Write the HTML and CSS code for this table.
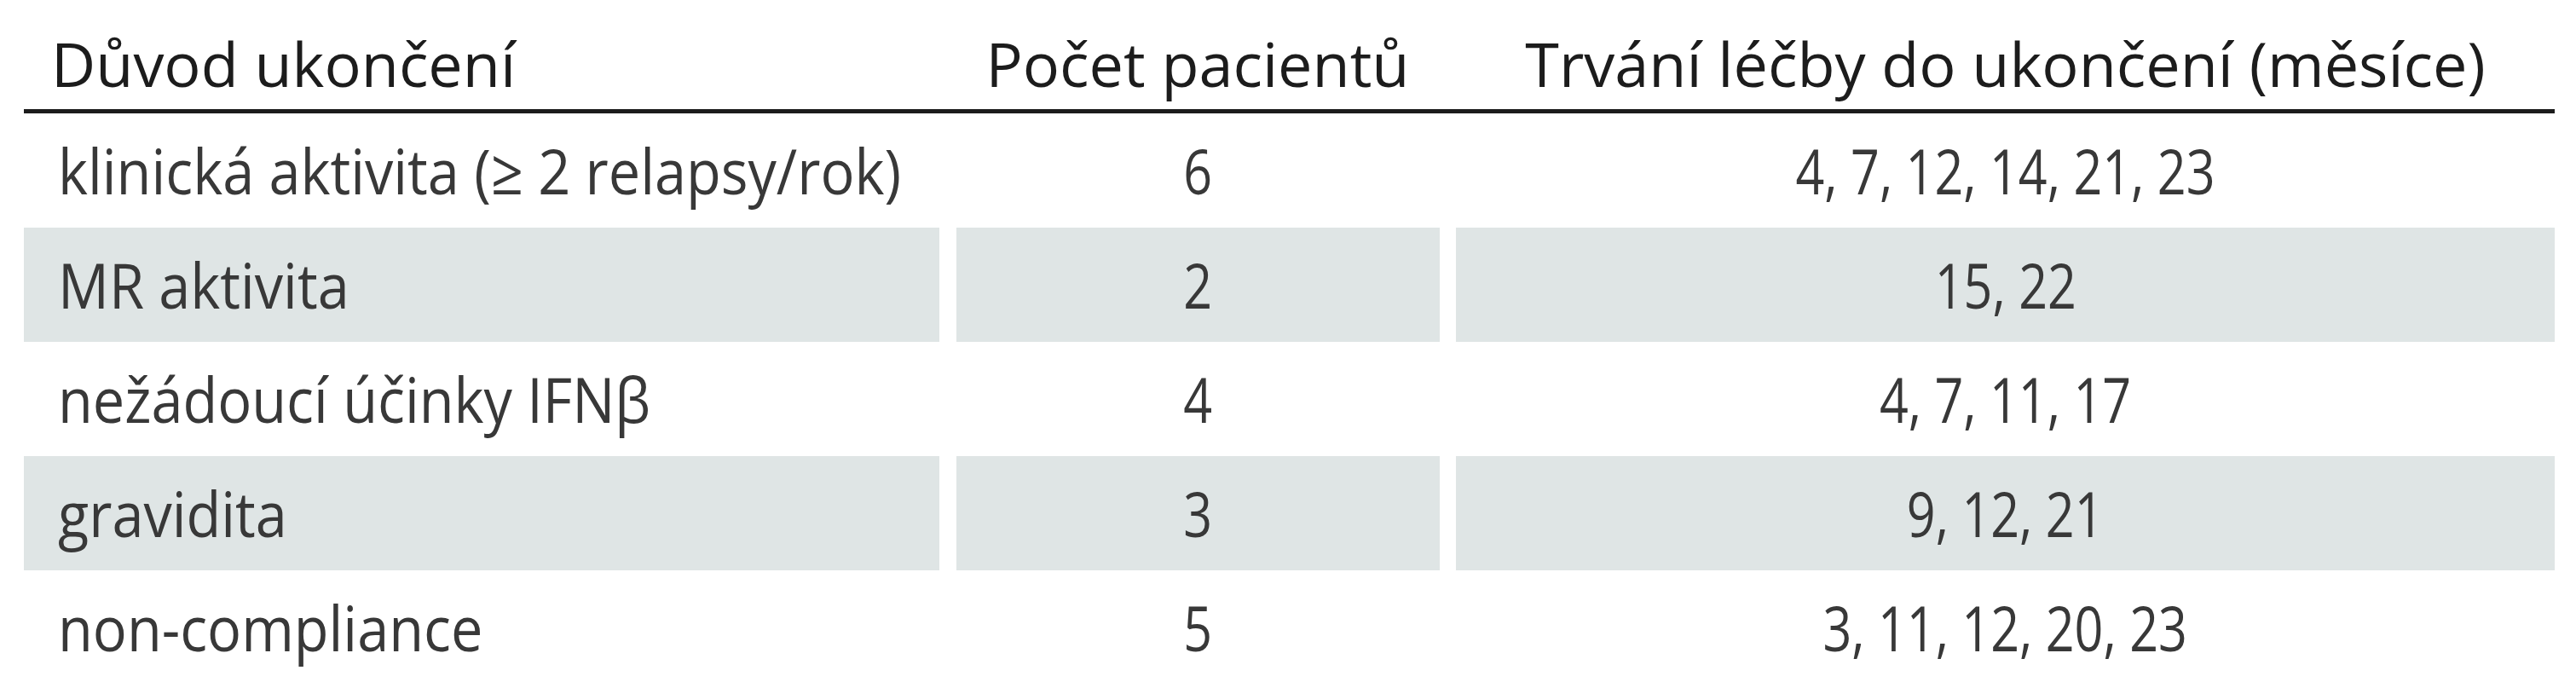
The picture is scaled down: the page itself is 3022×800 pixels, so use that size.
FILE: index.html
```html
<!DOCTYPE html>
<html lang="cs">
<head>
<meta charset="utf-8">
<title>Důvod ukončení</title>
<link rel="stylesheet" href="styles.css">
</head>
<body>
<div class="table">
  <div class="row head">
    <div class="cell first">Důvod ukončení</div>
    <div class="cell mid">Počet pacientů</div>
    <div class="cell last">Trvání léčby do ukončení (měsíce)</div>
  </div>
  <div class="row">
    <div class="cell first"><span class="t">klinická aktivita (≥ 2 relapsy/rok)</span></div>
    <div class="cell mid"><span class="n">6</span></div>
    <div class="cell last"><span class="n">4, 7, 12, 14, 21, 23</span></div>
  </div>
  <div class="row alt">
    <div class="cell first"><span class="t">MR aktivita</span></div>
    <div class="cell mid"><span class="n">2</span></div>
    <div class="cell last"><span class="n">15, 22</span></div>
  </div>
  <div class="row">
    <div class="cell first"><span class="t">nežádoucí účinky IFNβ</span></div>
    <div class="cell mid"><span class="n">4</span></div>
    <div class="cell last"><span class="n">4, 7, 11, 17</span></div>
  </div>
  <div class="row alt">
    <div class="cell first"><span class="t">gravidita</span></div>
    <div class="cell mid"><span class="n">3</span></div>
    <div class="cell last"><span class="n">9, 12, 21</span></div>
  </div>
  <div class="row">
    <div class="cell first"><span class="t">non-compliance</span></div>
    <div class="cell mid"><span class="n">5</span></div>
    <div class="cell last"><span class="n">3, 11, 12, 20, 23</span></div>
  </div>
</div>
</body>
</html>
```
FILE: styles.css
```css
html, body {
  margin: 0;
  padding: 0;
  background: #ffffff;
}

body {
  font-family: "Open Sans", "Noto Sans", sans-serif;
  width: 3022px;
  height: 800px;
  overflow: hidden;
}

.table {
  margin-left: 28px;
  width: 2969px;
}

.row {
  display: grid;
  grid-template-columns: 1074px 567px 1289px;
  column-gap: 19.5px;
  height: 134px;
}

.cell {
  display: flex;
  align-items: flex-start;
  font-size: 74px;
  line-height: 134px;
  color: #383838;
  white-space: nowrap;
}

.cell.first {
  padding-left: 40px;
}

.cell.mid,
.cell.last {
  justify-content: center;
}

.t {
  display: inline-block;
  transform: scaleX(0.9);
  transform-origin: left center;
}

.n {
  display: inline-block;
  transform: scaleX(0.8);
  transform-origin: center center;
}

.row.alt .cell {
  background: #dfe5e5;
}

.row.head {
  height: 128px;
  border-bottom: 5px solid #1c1c1c;
}

.row.head .cell {
  align-items: flex-end;
  font-size: 72px;
  line-height: 98px;
  padding-bottom: 5px;
  color: #1c1c1c;
}

.row.head .cell.first {
  padding-left: 32px;
}
```
